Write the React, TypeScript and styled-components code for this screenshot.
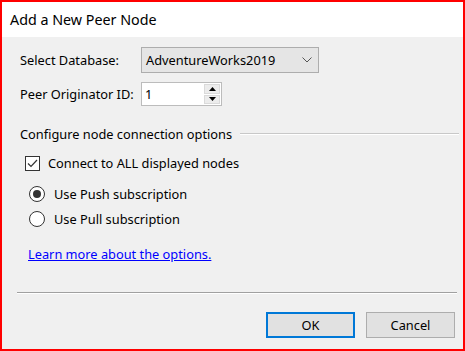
import React from 'react';
import styled, { createGlobalStyle } from 'styled-components';

const GlobalStyle = createGlobalStyle`
  html, body {
    margin: 0;
    padding: 0;
    background: #ffffff;
  }
  * {
    box-sizing: border-box;
  }
`;

const UI_FONT = `"Segoe UI", "Noto Sans", "Liberation Sans", sans-serif`;

const Window = styled.div`
  width: 465px;
  height: 351px;
  border: 2px solid #ff0000;
  display: flex;
  flex-direction: column;
  font-family: ${UI_FONT};
  color: #000;
  overflow: hidden;
`;

const TitleBar = styled.div`
  height: 35px;
  background: #ffffff;
  display: flex;
  align-items: center;
  padding-left: 8px;
  font-size: 14.3px;
  color: #000;
`;

const Body = styled.div`
  flex: 1;
  background: #f0f0f0;
  padding: 10px 0 0 18px;
  display: flex;
  flex-direction: column;
  font-size: 12.8px;
`;

const FormRow = styled.div<{ $top?: number; $height: number }>`
  display: flex;
  align-items: center;
  height: ${(p) => p.$height}px;
  margin-top: ${(p) => p.$top ?? 0}px;
`;

const Label = styled.span`
  width: 121px;
  flex-shrink: 0;
`;

const Dropdown = styled.div`
  width: 178px;
  height: 26px;
  background: #e5e5e5;
  border: 1px solid #adadad;
  display: flex;
  align-items: center;
  justify-content: space-between;
  padding: 0 6px 0 4px;
`;

const SpinBox = styled.div`
  width: 81px;
  height: 24px;
  background: #ffffff;
  border: 1px solid #bcbcbc;
  display: flex;
  align-items: stretch;
`;

const SpinValue = styled.span`
  flex: 1;
  display: flex;
  align-items: center;
  padding-left: 3px;
`;

const SpinButtons = styled.div`
  width: 17px;
  display: flex;
  flex-direction: column;
  padding: 1px 1px 1px 0;
  gap: 1px;
`;

const SpinButton = styled.div`
  flex: 1;
  background: #ececec;
  border: 1px solid #dadada;
  display: flex;
  align-items: center;
  justify-content: center;
`;

const GroupHeading = styled.div`
  display: flex;
  align-items: center;
  height: 16px;
  margin-top: 20px;
  padding-right: 4px;
  gap: 8px;
`;

const GroupLine = styled.div`
  flex: 1;
  height: 2px;
  border-top: 1px solid #c8c8c8;
  border-bottom: 1px solid #ffffff;
`;

const OptionRow = styled.label<{ $top: number; $indent: number; $gap: number }>`
  display: flex;
  align-items: center;
  height: 16px;
  margin-top: ${(p) => p.$top}px;
  padding-left: ${(p) => p.$indent}px;
  gap: ${(p) => p.$gap}px;
`;

const CheckBox = styled.span`
  width: 15px;
  height: 15px;
  border: 1px solid #333333;
  background: #ffffff;
  display: flex;
  align-items: center;
  justify-content: center;
`;

const Radio = styled.span<{ $checked?: boolean }>`
  width: 16px;
  height: 16px;
  border-radius: 50%;
  border: 1px solid #333333;
  background: #ffffff;
  display: flex;
  align-items: center;
  justify-content: center;

  &::after {
    content: '';
    width: 8px;
    height: 8px;
    border-radius: 50%;
    background: ${(p) => (p.$checked ? '#333333' : 'transparent')};
  }
`;

const Link = styled.a`
  margin-top: 19px;
  margin-left: 8px;
  height: 16px;
  line-height: 16px;
  color: #0000ff;
  text-decoration: underline;
  cursor: pointer;
  align-self: flex-start;
`;

const Separator = styled.div`
  margin: 30px 6px 0 -3px;
  height: 2px;
  border-top: 1px solid #a0a0a0;
  border-bottom: 1px solid #ffffff;
`;

const ButtonRow = styled.div`
  display: flex;
  justify-content: flex-end;
  gap: 11px;
  margin-top: 18px;
  padding-right: 8px;
`;

const DialogButton = styled.button<{ $default?: boolean }>`
  width: 89px;
  height: 26px;
  font-family: ${UI_FONT};
  font-size: 12.8px;
  color: #000;
  background: #e1e1e1;
  border: ${(p) => (p.$default ? '2px solid #0078d7' : '1px solid #adadad')};
  padding: 0;
`;

export default function App() {
  return (
    <>
      <GlobalStyle />
      <Window>
        <TitleBar>Add a New Peer Node</TitleBar>
        <Body>
          <FormRow $height={26}>
            <Label>Select Database:</Label>
            <Dropdown>
              <span>AdventureWorks2019</span>
              <svg width="10" height="6" viewBox="0 0 10 6">
                <path d="M0.5 0.5 L5 5 L9.5 0.5" fill="none" stroke="#555" strokeWidth="1" />
              </svg>
            </Dropdown>
          </FormRow>
          <FormRow $height={24} $top={9}>
            <Label>Peer Originator ID:</Label>
            <SpinBox>
              <SpinValue>1</SpinValue>
              <SpinButtons>
                <SpinButton>
                  <svg width="7" height="4" viewBox="0 0 7 4">
                    <path d="M0 4 L3.5 0 L7 4 Z" fill="#000" />
                  </svg>
                </SpinButton>
                <SpinButton>
                  <svg width="7" height="4" viewBox="0 0 7 4">
                    <path d="M0 0 L3.5 4 L7 0 Z" fill="#000" />
                  </svg>
                </SpinButton>
              </SpinButtons>
            </SpinBox>
          </FormRow>

          <GroupHeading>
            <span>Configure node connection options</span>
            <GroupLine />
          </GroupHeading>

          <OptionRow $top={13} $indent={5} $gap={8}>
            <CheckBox>
              <svg width="11" height="9" viewBox="0 0 11 9">
                <path d="M1 4.5 L4 7.5 L10 1" fill="none" stroke="#333" strokeWidth="1.2" />
              </svg>
            </CheckBox>
            <span>Connect to ALL displayed nodes</span>
          </OptionRow>
          <OptionRow $top={15} $indent={9} $gap={9}>
            <Radio $checked />
            <span>Use Push subscription</span>
          </OptionRow>
          <OptionRow $top={9} $indent={9} $gap={9}>
            <Radio />
            <span>Use Pull subscription</span>
          </OptionRow>

          <Link>Learn more about the options.</Link>

          <Separator />

          <ButtonRow>
            <DialogButton $default>OK</DialogButton>
            <DialogButton>Cancel</DialogButton>
          </ButtonRow>
        </Body>
      </Window>
    </>
  );
}
